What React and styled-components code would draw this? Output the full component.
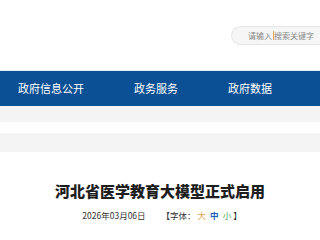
import React from 'react';
import styled, { createGlobalStyle } from 'styled-components';

const GlobalStyle = createGlobalStyle`
    html, body {
        margin: 0;
        padding: 0;
        background: #fff;
        font-family: "Noto Sans CJK SC", "Liberation Sans", sans-serif;
        overflow: hidden;
    }
`;

const Page = styled.div`
    width: 320px;
    height: 240px;
    overflow: hidden;
`;

const Header = styled.div`
    height: 70px;
    display: flex;
    justify-content: flex-end;
    align-items: flex-start;
    border-bottom: 1px solid #e2eef8;
`;

const SearchBox = styled.div`
    margin-top: 26px;
    width: 89px;
    height: 19px;
    box-sizing: border-box;
    display: flex;
    align-items: center;
    padding-left: 16px;
    background: #f6f6f6;
    border: 1px solid #e6e6e6;
    border-right: none;
    border-radius: 10px 0 0 10px;
    font-size: 8px;
    color: #888;
    white-space: nowrap;

    .caret{
        display: inline-block;
        width: 1px;
        height: 9px;
        background: #e3a64a;
        margin: 0 0.5px;
    }
`;

const Nav = styled.div`
    height: 35px;
    background: #0b4f94;
    display: flex;
    align-items: center;
    padding-left: 18px;
    gap: 50px;
`;

const NavItem = styled.a`
    font-size: 11px;
    color: #fff;
    text-decoration: none;
    line-height: 1;
`;

const Band = styled.div`
    height: ${props => props.h}px;
    background: ${props => props.gray ? '#f4f4f4' : '#fff'};
`;

const Article = styled.div`
    padding-top: 29px;
    text-align: center;
`;

const Title = styled.h1`
    margin: 0;
    font-size: 15px;
    font-weight: 900;
    color: #1e1e1e;
    line-height: 20px;
`;

const Meta = styled.div`
    margin-top: 8px;
    display: flex;
    justify-content: center;
    gap: 16px;
    font-size: 8.5px;
    color: #333;
    line-height: 12px;
    padding-left: 4px;
`;

const Size = styled.span`
    color: ${props => props.c};
    font-weight: ${props => props.active ? 700 : 400};
    margin: 0 2px;
`;

const App = () => {
    return (
        <Page>
            <GlobalStyle />
            <Header>
                <SearchBox>请输入<span className="caret" />搜索关键字</SearchBox>
            </Header>
            <Nav>
                <NavItem>政府信息公开</NavItem>
                <NavItem>政务服务</NavItem>
                <NavItem>政府数据</NavItem>
            </Nav>
            <Band gray h={16} />
            <Band h={11} />
            <Band gray h={19} />
            <Article>
                <Title>河北省医学教育大模型正式启用</Title>
                <Meta>
                    <span>2026年03月06日</span>
                    <span>
                        【字体：<Size c="#e3a64a">大</Size>
                        <Size c="#1a5fb4" active>中</Size>
                        <Size c="#5aa36a">小</Size>】
                    </span>
                </Meta>
            </Article>
        </Page>
    );
};

export default App;
